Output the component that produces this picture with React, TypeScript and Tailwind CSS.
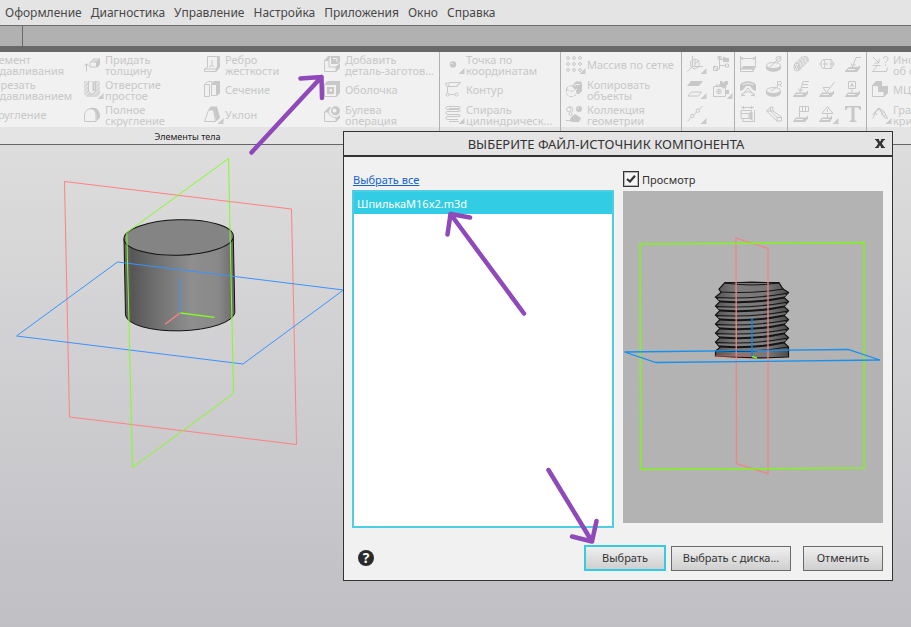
import type { ReactNode } from "react";

const menuItems = [
  "Оформление",
  "Диагностика",
  "Управление",
  "Настройка",
  "Приложения",
  "Окно",
  "Справка",
];

const icons: Record<string, ReactNode> = {
  extrude: <path d="M2 5l4-4h9v9l-4 5H2z" />,
  thicken: (
    <>
      <path d="M2.500 15.500V8M.5 10l2-2.500 2 2.500" />
      <path d="M5.500 6.500l4-4H16v6l-3 3.500V6.500z" fill="currentColor" stroke="none" />
      <path d="M8 6l3-2h3" stroke="#f1f1f1" />
      <path d="M6 6.500v4.500h6.500v-4.500" />
    </>
  ),
  hole: (
    <>
      <path d="M0 0h16v13l-3 3H3l-3-3z" fill="currentColor" stroke="none" opacity=".6" />
      <path d="M0 4l4-4M0 8l5-5M0 12l5-5M1 15l5-5M11 5l5-5M11 9l5-5M10 14l6-6" stroke="#f1f1f1" strokeWidth=".7" />
      <path d="M4.500 0v10L8 13.500l3.500-3.500V0z" fill="#f1f1f1" />
      <path d="M9.500 1v9" strokeWidth="2" />
    </>
  ),
  fillet: (
    <>
      <path d="M.5 15.500V9C1 5 4 2.500 7 2.500S12 6 12 9v6.500z" />
      <path d="M4.500 3.500C7 1 12 1 14 4c2 3 2 4 2 7.500L12.500 15V9c0-3-3-7-8-5.500z" fill="currentColor" stroke="none" />
    </>
  ),
  rib: (
    <>
      <path d="M3.500 11.500V.5H15M3.500 11.500L.5 13v2.500h11.500V13H.5M5 11l3-1.500V4M8 9.500l2 1.500" />
      <path d="M13 1l3-1v11l-4 5v-4l1-1z" fill="currentColor" stroke="none" />
    </>
  ),
  section: (
    <>
      <path d="M.5 3.500l3-3H8V3M.5 3.500h5v12h-5z" />
      <path d="M7.500 3.500h5v11h-5z" />
      <path d="M7 3l3-3h6l-3 3zM13 3l3-3v12l-3 3z" fill="currentColor" stroke="none" />
    </>
  ),
  draft: (
    <>
      <path d="M.5 15.500L4.500 4h5l2 11.500z" />
      <path d="M9.500 4L13 .5l3 11-3.500 4zM4.500 4l2-3.500H13L9.500 4z" fill="currentColor" stroke="none" />
    </>
  ),
  addPart: (
    <>
      <path d="M.5 4.500v11H12M.5 4.500H5v6.500h7v4.500" />
      <path d="M0 4.500L4 0h3L5 4.500zM7 0h9v6l-2 2H7zM12 10.500L16 7v5l-4 4z" fill="currentColor" stroke="none" />
      <path d="M9 2.500h4v4" stroke="#f1f1f1" />
    </>
  ),
  shell: (
    <>
      <path d="M.5 3.500h12v12H.5z" />
      <path d="M0 3.500L3.500 0H16l-3.500 3.500zM12.500 3.500L16 0v12l-3.500 4zM3 6h7v7H3z" fill="currentColor" stroke="none" />
      <path d="M5.500 8h2.500v2.500H5.500z" fill="#f1f1f1" stroke="none" />
    </>
  ),
  boolean: (
    <>
      <path d="M.5 6v9.500H12V12M.5 6h4c1 4 4 5.500 7.500 5.500" />
      <path d="M0 6l5-5h2L4.500 6zM12 11.500l4-2.500v3l-4 4z" fill="currentColor" stroke="none" />
      <circle cx="11.500" cy="4.800" r="4.500" fill="currentColor" stroke="none" />
      <circle cx="10.500" cy="4.500" r="2" fill="#f1f1f1" stroke="none" />
    </>
  ),
  point: (
    <>
      <circle cx="8" cy="8.500" r="3.200" fill="currentColor" stroke="none" />
      <circle cx="7" cy="7.500" r=".8" fill="#f1f1f1" stroke="none" />
    </>
  ),
  contour: (
    <>
      <path d="M0 2.500h2M4 1.500h11.500L11 5.500H3M2.500 5.500v7M4.500 13.500h7V12M15.500 1.500L11.500 6" />
      <circle cx="2.500" cy="3.500" r="1.600" fill="#f1f1f1" />
      <circle cx="2.500" cy="13.500" r="1.600" fill="#f1f1f1" />
      <circle cx="11.500" cy="13.500" r="1.600" fill="#f1f1f1" />
    </>
  ),
  spiral: (
    <path d="M14 .5H3C0 .5 0 3.500 3 3.500h10c3 0 3 2 0 2H3c-3 0-3 3 0 3h10c3 0 3 2 0 2H3c-3 0-3 3 0 3h10M13 .5c3 0 3 2 0 2H4M4 15.500h10" />
  ),
  grid: (
    <>
      {[2, 8, 14].map((y) =>
        [2, 8, 14].map((x) => <circle key={`${x}-${y}`} cx={x} cy={y} r="1.400" />)
      )}
    </>
  ),
  copy: (
    <>
      <path d="M6 5l4-4.500h5L16 3v7l-3 3h-2V8H8z" fill="currentColor" stroke="none" />
      <path d="M8 5l2-1.500h4" stroke="#f1f1f1" />
      <path d="M.5 8l2-3h4M.5 8v5l3 2.500h4l3-2.500V9M.5 8l3 2h4L10 8" strokeDasharray="3 1.500" />
    </>
  ),
  collection: (
    <>
      <circle cx="2.800" cy="3.500" r="2.200" />
      <circle cx="4.500" cy="8" r="1.500" />
      <path d="M3 1c3-1 5 1 3 5" />
      <circle cx="13" cy="3" r="3" fill="currentColor" stroke="none" />
      <circle cx="12.300" cy="2.300" r=".8" fill="#f1f1f1" stroke="none" />
      <path d="M5 11l4-3 6 4-2 4H5l-1-2z" fill="currentColor" stroke="none" />
      <path d="M0 14.500h6" />
    </>
  ),
  axes: (
    <path d="M5.500 0v10.500L.5 15.500M5.500 10.500H16M3.500 5.500L8 3l4 2v5.500L8 13l-4-1.500zM8 3v7M12 5L8 7.500" />
  ),
  tree: (
    <>
      <path d="M6.500 1v12H4M6.500 3.500H11M6.500 9.500H12" />
      <path d="M10 1h2l1 1h3v4h-6z" fill="currentColor" stroke="none" />
      <path d="M.5 10.500h4v4h-4zM12.500 8h3v3h-3zM5 .5h3v2.500H5zM.5 10.500l4 4" />
    </>
  ),
  plane: (
    <>
      <path d="M4 0h12l-4 5H0z" fill="currentColor" stroke="none" />
      <path d="M4.500 11h10l-3 4H1z" />
    </>
  ),
  camera: (
    <>
      <path d="M.5 5.500h12v10H.5zM3 5.500V4h4v1.500" />
      <circle cx="6" cy="10.500" r="2.300" />
      <circle cx="6" cy="10.500" r=".8" fill="currentColor" />
      <path d="M7 0h2l1.500 2L12 0h3v3l-4.500 5L7 4zM12 9h4v4h-3z" fill="currentColor" stroke="none" />
    </>
  ),
  axisLine: (
    <>
      <path d="M.5 15.500l3.500-4M6.500 9l3-3M12 3.500L15.500 0" />
      <circle cx="5.300" cy="10" r="1.700" />
      <circle cx="10.800" cy="4.700" r="1.700" />
    </>
  ),
  dimension: (
    <>
      <path d="M.5 0v15.500H13V12M15.500 0v10.500H3M1 2.500h14M3 1L1 2.500 3 4M13 1l2 1.500L13 4" />
      <path d="M0 13.500l3-3h13l-3 5.500v-2.500z" fill="currentColor" stroke="none" />
    </>
  ),
  diameter: (
    <>
      <ellipse cx="7.500" cy="9.500" rx="7" ry="3" />
      <path d="M0 9.500c2 4 13 4 15 0V12c-1 5-14 5-15 0z" fill="currentColor" stroke="none" />
      <path d="M4 11L15.500 0" />
      <circle cx="12.500" cy="3" r="2.500" />
    </>
  ),
  angle: (
    <>
      <path d="M0 4c3-5 13-5 16 0v6l-3-1-3-4H6L3 9l-3 1z" fill="currentColor" stroke="none" />
      <path d="M3 4c3-2 7-2 10 0" stroke="#f1f1f1" />
      <path d="M8 7l-7 8.500M8 7l7 8.500M3 13c3-3 7-3 10 0M2 12v2.500h3M14 12v2.500h-3" />
    </>
  ),
  radius: (
    <>
      <ellipse cx="7.500" cy="9.500" rx="7" ry="3" />
      <path d="M0 9.500c2 4 13 4 15 0V12c-1 5-14 5-15 0z" fill="currentColor" stroke="none" />
      <path d="M5 10l6-4M11.500 6V.5H14c2 0 2 3 0 3h-2.500M14 3.500L15.500 6" />
    </>
  ),
  size: (
    <>
      <path d="M1 4.500h10.500v8H1zM1 7.500h8v5M3.500 0v3M11.500 0v3M14.500 4v12M1 1.500h13M3 15.500h12M3 13v3" />
      <path d="M9.500 6h3v9l-3-2.500z" fill="currentColor" stroke="none" />
    </>
  ),
  cut: (
    <path d="M.5 5l4-4H7v4l8.500 6v4H11L.5 5zM4.500 1v4H.5M7 5H4.500L11 11.500h4.500M11 11.500v4" />
  ),
  coil: (
    <>
      <path d="M2 7l7-7h4c2 0 3 3 3 5L6 15H3z" fill="currentColor" stroke="none" opacity=".7" />
      <path d="M4 5c3 0 4 3 4 6M6.500 3c3 0 4 3 4 6M9 1c3 0 4 3 4 6" stroke="#f1f1f1" />
      <ellipse cx="3.500" cy="11" rx="2.500" ry="4" fill="#f1f1f1" />
      <ellipse cx="3.500" cy="11" rx="1" ry="2" />
    </>
  ),
  cylinder: (
    <>
      <ellipse cx="4" cy="8" rx="2" ry="4.500" />
      <path d="M4 3.500h8c3 2 3 7 0 9H4M0 8h2M4 8h5M11 8h5M12 3.500v9" />
    </>
  ),
  leader: (
    <>
      <path d="M0 15l4-4h9l2-2v3l-3 4H0z" fill="currentColor" stroke="none" />
      <path d="M3 13.500h7" stroke="#f1f1f1" />
      <path d="M7.500 10.500L11 1.500h5M6 7.500l1.500 3 3-2" />
    </>
  ),
  leaderE: (
    <>
      <path d="M0 15.500l3-4h10l2-2v3l-3 3.500H0z" fill="currentColor" stroke="none" />
      <path d="M3 13.500h7" stroke="#f1f1f1" />
      <path d="M7 10.500L10 .5h6M9.500 3.500H15M9 6.500h6M5.500 7.500l1.500 3 3-2" />
    </>
  ),
  roughness: (
    <>
      <path d="M0 15.500l3-4h10l2-2v3l-3 3.500H0z" fill="currentColor" stroke="none" />
      <path d="M3 13.500h7" stroke="#f1f1f1" />
      <path d="M4 6.500l3.500 5L15.500 1M4 6.500h6.500" />
    </>
  ),
  datum: (
    <>
      <path d="M0 15.500l3-4h10l2-2v3l-3 3.500H0z" fill="currentColor" stroke="none" />
      <path d="M3 13.500h7" stroke="#f1f1f1" />
      <path d="M3.500.5h7v7h-7zM7 7.500V12M5.500 6L7 2.500 8.500 6M6 4.500h2" />
    </>
  ),
  tolerance: (
    <>
      <path d="M0 15.500l3-4h10l2-2v3l-3 3.500H0z" fill="currentColor" stroke="none" />
      <path d="M3 13.500h7" stroke="#f1f1f1" />
      <path d="M6.500 11V.5h9v5h-9M9.500.5v5M12.500.5v5" />
    </>
  ),
  warning: (
    <>
      <path d="M0 15.500l3-4h8l2-2v3l-2 3.500H0z" fill="currentColor" stroke="none" />
      <path d="M3 13.500h7" stroke="#f1f1f1" />
      <path d="M8.500.5l5.500 7H3zM8.500 3v3M8.500 7.500V12" />
    </>
  ),
  text: (
    <path d="M0 0h16v4h-1l-2-2.500H9.500V14l2 1v1h-7v-1l2-1V1.500H3L1 4H0z" fill="currentColor" stroke="none" />
  ),
  inspect: (
    <path d="M1 1l5.500 5.500M7 2.500V7H2.500M.5 9.500h8M.5 15.500h14l1-4M.5 15.500l5-6M11.500 3c0-3.500 4.500-3.500 4.500 0 0 2-2.500 2-2.500 4M13.500 8.500V10" />
  ),
  mass: (
    <>
      <path d="M.5 4.500h6v6H12v5H.5z" />
      <path d="M0 4.500L4 0h6v5h6v7l-4 4v-6H6.500V4.500z" fill="currentColor" stroke="none" />
    </>
  ),
  graph: (
    <path d="M.5 12.500C3 9 4 3.500 7 3.500S10 12 15.500 12.500M.5 9l6-7 5 3 4 7M3 6l2 3M6.500 2v2M9 3.500L8 6M11.500 5L9.500 9M13.500 8.500l-2 2.500" />
  ),
};

type Tool = { icon: string; label?: string[]; name?: string; flyout?: boolean };

const bodyTools: Tool[] = [
  { icon: "extrude", label: ["Элемент", "выдавливания"] },
  { icon: "extrude", label: ["Вырезать", "выдавливанием"] },
  { icon: "fillet", label: ["Скругление"] },
  { icon: "thicken", label: ["Придать", "толщину"] },
  { icon: "hole", label: ["Отверстие", "простое"], flyout: true },
  { icon: "fillet", label: ["Полное", "скругление"] },
  { icon: "rib", label: ["Ребро", "жесткости"] },
  { icon: "section", label: ["Сечение"] },
  { icon: "draft", label: ["Уклон"], flyout: true },
  { icon: "addPart", label: ["Добавить", "деталь-заготов..."] },
  { icon: "shell", label: ["Оболочка"] },
  { icon: "boolean", label: ["Булева", "операция"] },
];

const curveTools: Tool[] = [
  { icon: "point", label: ["Точка по", "координатам"], flyout: true },
  { icon: "contour", label: ["Контур"] },
  { icon: "spiral", label: ["Спираль", "цилиндрическ..."], flyout: true },
];

const arrayTools: Tool[] = [
  { icon: "grid", label: ["Массив по сетке"], flyout: true },
  { icon: "copy", label: ["Копировать", "объекты"] },
  { icon: "collection", label: ["Коллекция", "геометрии"] },
];

const auxTools: Tool[] = [
  { icon: "axes", name: "Система координат", flyout: true },
  { icon: "plane", name: "Плоскость", flyout: true },
  { icon: "axisLine", name: "Ось", flyout: true },
  { icon: "tree", name: "Структура" },
  { icon: "camera", name: "Вид", flyout: true },
];

const sizeTools: Tool[] = [
  { icon: "dimension", name: "Линейный размер" },
  { icon: "angle", name: "Угловой размер" },
  { icon: "size", name: "Размеры" },
  { icon: "diameter", name: "Диаметр" },
  { icon: "radius", name: "Радиус" },
  { icon: "cut", name: "Разрез" },
];

const markTools: Tool[] = [
  { icon: "coil", name: "Резьба" },
  { icon: "leaderE", name: "Клеймение" },
  { icon: "tolerance", name: "Допуск формы" },
  { icon: "cylinder", name: "Осевая" },
  { icon: "roughness", name: "Шероховатость" },
  { icon: "warning", name: "Знак", flyout: true },
  { icon: "leader", name: "Выноска" },
  { icon: "datum", name: "База" },
  { icon: "text", name: "Текст" },
];

const checkTools: Tool[] = [
  { icon: "inspect", label: ["Информация", "об объекте"] },
  { icon: "mass", label: ["МЦХ модели"] },
  { icon: "graph", label: ["График", "кривизны"], flyout: true },
];

const ToolButton = ({ tool }: { tool: Tool }) => (
  <button type="button" aria-label={tool.name} className="flex h-[25px] items-center gap-px text-left">
    <svg viewBox="0 0 20 18" className="h-[18px] w-5 shrink-0" fill="none" stroke="currentColor" aria-hidden="true">
      {icons[tool.icon]}
      {tool.flyout && (
        <path d="M12 19l8-8v8z" fill="#cbcbcb" stroke="#f1f1f1" />
      )}
    </svg>
    {tool.label && (
      <span className="whitespace-nowrap">
        {tool.label.map((line) => (
          <span key={line} className="block">{line}</span>
        ))}
      </span>
    )}
  </button>
);

const ToolGroup = ({
  tools,
  caption,
  className,
  grid,
}: {
  tools: Tool[];
  caption?: string;
  className: string;
  grid: string;
}) => (
  <div className={`flex shrink-0 flex-col ${className}`}>
    <div className={`grid grid-flow-col grid-rows-[repeat(3,25px)] ${grid}`}>
      {tools.map((tool, i) => (
        <ToolButton key={i} tool={tool} />
      ))}
    </div>
    <div className="h-[17px] bg-[#e4e4e4] text-center text-[9px] leading-[19px] text-[#222]">{caption}</div>
  </div>
);

const ModelScene = () => (
  <svg viewBox="0 145 344 482" className="block h-[482px] w-[344px]" fill="none" aria-label="Модель">
    <defs>
      <linearGradient id="side">
        <stop offset="0" stopColor="#6e6e6e" />
        <stop offset=".07" stopColor="#565656" />
        <stop offset=".3" stopColor="#717171" />
        <stop offset=".6" stopColor="#8e8e8e" />
        <stop offset=".85" stopColor="#898989" />
        <stop offset="1" stopColor="#696969" />
      </linearGradient>
    </defs>
    <path
      d="M124 238.500L125.500 315A54.700 17.700 -1.500 0 0 234.800 312.500L233.300 236.500z"
      fill="url(#side)"
      stroke="#111"
    />
    <ellipse cx="178.700" cy="237.500" rx="54.700" ry="17.700" transform="rotate(-1.500 178.700 237.500)" fill="#848484" stroke="#111" />
    <path d="M64.500 181.500L291.500 209L296.500 444.500L69.500 417z" stroke="#ff8080" />
    <path d="M16.500 336L117.500 262L343.500 290L243 364z" stroke="#3b92ff" />
    <path d="M228.500 158.500L233.500 393.500L132.500 467.500L126.800 232.500z" stroke="#80ff20" />
    <path d="M180 313V277.500" stroke="#4090ff" />
    <path d="M180.500 313L214.500 317.300" stroke="#80ff20" strokeWidth="1.300" />
    <path d="M180 313L165 324.300" stroke="#ff8080" strokeWidth="1.300" />
  </svg>
);

const threads = [0, 1, 2, 3, 4, 5];

const PreviewScene = () => (
  <svg viewBox="0 0 260 332" className="block w-full" fill="none" aria-label="Просмотр модели">
    <defs>
      <linearGradient id="stud">
        <stop offset="0" stopColor="#555" />
        <stop offset=".3" stopColor="#7c7c7c" />
        <stop offset=".7" stopColor="#787878" />
        <stop offset="1" stopColor="#4c4c4c" />
      </linearGradient>
    </defs>
    <path
      d="M102 91.500L96 98L98 101.500L92.500 106L97 110.500L92.500 115L97 119.500L92.500 124L97 128.500L92.500 133L97 137.500L92.500 142L97 146.500L92.500 151L97 156.500L92.500 160V165Q128 168 165.500 166V156L161 151.500L165.500 146.500L161 142.500L165.500 137.500L161 133.500L165.500 128.500L161 124.500L165.500 119.500L161 115.500L165.500 110.500L161 106.500L165.500 101.500L160 98L156 91.500z"
      fill="url(#stud)"
      stroke="#151515"
      strokeWidth="1.200"
    />
    <path d="M102 92Q129 90 156 92Q129 96 102 92M97 101Q130 103 161 98" stroke="#151515" />
    {threads.map((i) => (
      <g key={i} transform={`translate(0 ${i * 9})`} stroke="#151515">
        <path d="M92.500 106.500Q130 108.500 165.500 102" strokeWidth="1.100" />
        <path d="M97 110.500Q130 113 161 106.500" strokeWidth="1.900" />
        <path d="M95 108.500Q130 110.500 163 104.500" stroke="#8b8b8b" strokeWidth=".7" />
      </g>
    ))}
    <path d="M92.500 160Q130 162 165.500 156" stroke="#151515" />
    <path d="M113 47L145 57.500V282.500L113.500 272.500z" stroke="#ee8585" strokeWidth="1.300" />
    <path d="M17 53L241 51.500V277L17.700 278.500z" stroke="#80f51a" strokeWidth="1.500" />
    <path d="M1.500 161L225 158.500L257 169L33 171.500z" stroke="#1690f0" strokeWidth="1.300" />
    <path d="M92.500 165H128" stroke="#e05555" />
    <path d="M129 127V165" stroke="#1680df" strokeWidth="1.500" />
    <path d="M129 165.500l5 1.500" stroke="#80f51a" strokeWidth="1.500" />
  </svg>
);

const SourceDialog = () => (
  <div
    role="dialog"
    aria-labelledby="dialog-title"
    className="absolute left-[343px] top-[131px] w-[550px] border border-[#333] bg-[#f1f1f1] text-[11px] text-[#333]"
  >
    <div className="flex h-[25px] items-center border-b-2 border-[#333] bg-[#e4e4e4]">
      <h2 id="dialog-title" className="flex-1 pt-0.5 text-center text-[13px]">ВЫБЕРИТЕ ФАЙЛ-ИСТОЧНИК КОМПОНЕНТА</h2>
      <button type="button" aria-label="Закрыть" className="flex w-6 justify-center">
        <svg viewBox="0 0 10 9" className="h-[9px] w-2.5" fill="#333" aria-hidden="true">
          <path d="M0 0h4v1L5 2.800 6.200 1V0H10v1H9L6.800 4.500 9.200 8h.8v1H6V8L5 6.300 3.800 8v1H0V8h1l2.200-3.500L.8 1H0z" />
        </svg>
      </button>
    </div>
    <div className="px-2 pb-[9px] pt-3.5">
      <div className="flex gap-[9px] pr-px">
        <div className="flex w-[262px] flex-col gap-[3px]">
          <a href="#" className="h-4 self-start pl-px leading-[18px] text-[#1464c8] underline">Выбрать все</a>
          <ul className="h-[338px] border-2 border-[#4fcde2] bg-white">
            <li className="h-[22px] bg-[#33cce5] px-[3px] leading-6 text-white">ШпилькаM16x2.m3d</li>
          </ul>
        </div>
        <div className="flex flex-1 flex-col gap-1">
          <label className="relative flex h-4 items-center gap-[3px]">
            <input type="checkbox" defaultChecked className="peer size-4 appearance-none border border-[#333] bg-[#f4f4f4] outline outline-1 -outline-offset-2 outline-[#55555566]" />
            <svg viewBox="0 0 10 8" className="absolute left-[3px] top-1 hidden h-2 w-2.5 peer-checked:block" fill="none" stroke="#333" strokeWidth="2.200" aria-hidden="true">
              <path d="M1 4l3 2.500L9 .8" />
            </svg>
            <span className="pt-0.5 leading-4">Просмотр</span>
          </label>
          <div className="bg-[#b3b3b3]">
            <PreviewScene />
          </div>
        </div>
      </div>
      <div className="flex items-center pr-px pt-[17px]">
        <button type="button" aria-label="Помощь" className="ml-1.5 flex size-4 items-center justify-center rounded-full bg-[#2b2b2b] text-[14px] font-bold leading-4 text-white">
          ?
        </button>
        <button type="button" className="ml-auto h-[26px] w-[82px] border-2 border-[#33cce5] bg-linear-to-b from-[#efefef] to-[#cfcfcf]">
          Выбрать
        </button>
        <button type="button" className="ml-[5px] h-[25px] w-[120px] border border-[#6a6a6a] bg-linear-to-b from-[#efefef] to-[#cfcfcf]">
          Выбрать с диска...
        </button>
        <button type="button" className="ml-3 h-[25px] w-20 border border-[#6a6a6a] bg-linear-to-b from-[#efefef] to-[#cfcfcf]">
          Отменить
        </button>
      </div>
    </div>
  </div>
);

const Arrows = () => (
  <svg
    viewBox="0 0 911 627"
    className="pointer-events-none absolute left-0 top-0 h-[627px] w-[911px]"
    fill="none"
    stroke="#8f49b8"
    strokeWidth="4.500"
    strokeLinecap="round"
    strokeLinejoin="round"
    aria-hidden="true"
  >
    <path d="M251.500 152.500L321.500 77M300.500 78.500L321.500 77L322 98" />
    <path d="M524 313.500L450.500 214M470 217.500L450.500 214L447.500 234.500" />
    <path d="M548.500 470L592 541.500M596.500 521L592 541.500L572 536.500" />
  </svg>
);

export default function App() {
  return (
    <div className="relative flex min-h-screen flex-col overflow-hidden bg-[#e4e4e4] font-['Noto_Sans',sans-serif] text-[12px]">
      <nav className="flex h-[26px] items-center gap-[9px] border-b border-[#6b6b6b] bg-[#e4e4e4] px-[5px] text-[#484848]">
        {menuItems.map((item) => (
          <button key={item} type="button">{item}</button>
        ))}
      </nav>
      <div className="flex h-5 bg-[#b1b1b1]">
        <div className="w-[23px] border-r border-[#686868]" />
      </div>
      <div className="h-1.5 bg-[#686868]" />

      <div className="flex overflow-hidden border-b border-[#666] bg-[#f1f1f1] text-[11px] leading-[11px] text-[#c8c8c8]">
        <ToolGroup tools={bodyTools} caption="Элементы тела" className="-ml-16 w-[503px]" grid="auto-cols-[120px] pl-7" />
        <ToolGroup tools={curveTools} className="w-[121px] border-l border-[#b1b1b1]" grid="pl-[5px]" />
        <ToolGroup tools={arrayTools} className="w-[121px] border-l border-[#b1b1b1]" grid="pl-[5px]" />
        <ToolGroup tools={auxTools} className="border-l border-[#b1b1b1]" grid="gap-x-1.5 pl-[5px] pr-px" />
        <ToolGroup tools={sizeTools} className="border-l border-[#b1b1b1]" grid="gap-x-1.5 pl-[5px] pr-px" />
        <ToolGroup tools={markTools} className="border-l border-[#b1b1b1]" grid="gap-x-1.5 pl-[5px] pr-px" />
        <ToolGroup tools={checkTools} className="w-[121px] border-l border-[#b1b1b1]" grid="pl-[5px]" />
      </div>

      <main className="flex-1 bg-linear-to-b from-[#dddddd] to-[#c0bfc4]">
        <ModelScene />
      </main>

      <SourceDialog />
      <Arrows />
    </div>
  );
}
